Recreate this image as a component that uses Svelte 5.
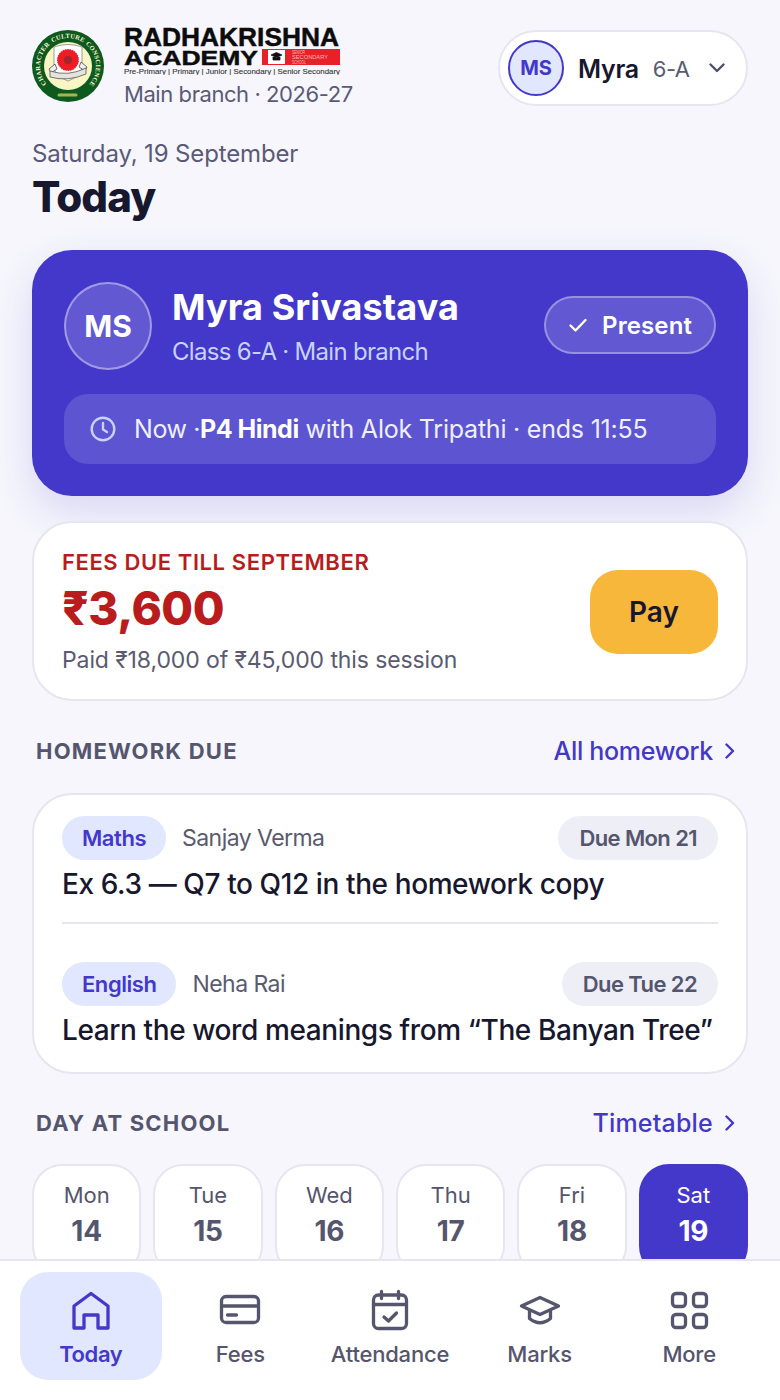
<script>
  const days = [
    { d: 'Mon', n: 14 }, { d: 'Tue', n: 15 }, { d: 'Wed', n: 16 },
    { d: 'Thu', n: 17 }, { d: 'Fri', n: 18 }, { d: 'Sat', n: 19, on: true }
  ];
</script>

<div class="page">
  <header class="top">
    <div class="brand">
      <svg class="emblem" viewBox="0 0 72 72" width="72" height="72">
        <defs>
          <path id="ringTop" d="M8 36a28 28 0 0 1 56 0" />
        </defs>
        <circle cx="36" cy="36" r="36" fill="#0e5a1e" />
        <circle cx="36" cy="36" r="24" fill="#f8f6c4" />
        <text class="ring"><textPath href="#ringTop" startOffset="50%" text-anchor="middle">CULTURE</textPath></text>
        <text class="ring" transform="rotate(85 36 36)"><textPath href="#ringTop" startOffset="50%" text-anchor="middle">CONSCIENCE</textPath></text>
        <text class="ring" transform="rotate(-85 36 36)"><textPath href="#ringTop" startOffset="50%" text-anchor="middle">CHARACTER</textPath></text>
        <path d="M22 17 Q36 12 50 17 V38 Q49 46 36 51 Q23 46 22 38Z" fill="#fff" stroke="#777" stroke-width=".7" />
        <circle cx="36" cy="30" r="11" fill="#ee1c25" />
        <circle cx="36" cy="30" r="11.500" fill="none" stroke="#fff" stroke-width="2" stroke-dasharray="1 1.600" />
        <circle cx="36" cy="30" r="4" fill="#a3262a" />
        <path d="M17 39l6-5 2 5-6 4zM55 37l-6-5-2 5 6 4z" fill="#eee" stroke="#333" stroke-width=".7" />
        <path d="M18 41q18 6 36-3v6q-18 8-36 3z" fill="#e4e4dc" stroke="#555" stroke-width=".8" />
        <path d="M27 65h18" stroke="#a5b54e" stroke-width="3" stroke-linecap="round" stroke-dasharray="2 1" />
      </svg>
      <div class="brand-text">
        <svg class="wordmark" viewBox="0 0 218 48" width="218" height="48">
          <text class="wm" x="0" y="19" font-size="25" textLength="215" lengthAdjust="spacingAndGlyphs">RADHAKRISHNA</text>
          <text class="wm" x="0" y="37.500" font-size="20.500" textLength="134" lengthAdjust="spacingAndGlyphs">ACADEMY</text>
          <rect x="138" y="22" width="78" height="16" fill="#e8202a" />
          <rect x="144" y="23" width="17" height="14" fill="#fff" />
          <path d="M147 28l5.500-2.500 5.500 2.500-5.500 2.500zM149 30v3h7v-3" fill="#111" stroke="#111" stroke-width=".8" />
          <text class="tag" x="168" y="27" textLength="13" lengthAdjust="spacingAndGlyphs">SENIOR</text>
          <text class="tag" x="168" y="31.800" textLength="36" lengthAdjust="spacingAndGlyphs">SECONDARY</text>
          <text class="tag" x="168" y="36.500" textLength="14" lengthAdjust="spacingAndGlyphs">SCHOOL</text>
          <text class="levels" x="0" y="47" textLength="216" lengthAdjust="spacingAndGlyphs">Pre-Primary | Primary | Junior  | Secondary | Senior Secondary</text>
        </svg>
        <div class="branch">Main branch · 2026-27</div>
      </div>
    </div>
    <button class="switch">
      <span class="mini">MS</span>
      <span class="sw-name">Myra</span>
      <span class="sw-class">6-A</span>
      <svg class="chev" viewBox="0 0 16 10" width="16" height="10"><path d="M1.500 1.500 8 8l6.500-6.500" /></svg>
    </button>
  </header>

  <div class="date">Saturday, 19 September</div>
  <h1>Today</h1>

  <section class="hero">
    <div class="hero-top">
      <div class="avatar">MS</div>
      <div class="hero-id">
        <div class="name">Myra Srivastava</div>
        <div class="cls">Class 6-A · Main branch</div>
      </div>
      <div class="present">
        <svg viewBox="0 0 20 20" width="20" height="20"><path d="M2.500 10.500 7.500 15.500 17.500 5" /></svg>
        Present
      </div>
    </div>
    <div class="now">
      <svg viewBox="0 0 26 26" width="26" height="26"><circle cx="13" cy="13" r="11.300" /><path d="M13 7v6.500l4 2.500" /></svg>
      <span><span class="now-lead">Now · </span><b>P4 Hindi</b> with Alok Tripathi · ends 11:55</span>
    </div>
  </section>

  <section class="fees">
    <div>
      <div class="fees-label">FEES DUE TILL SEPTEMBER</div>
      <div class="fees-amt">₹3,600</div>
      <div class="fees-paid">Paid ₹18,000 of ₹45,000 this session</div>
    </div>
    <button class="pay">Pay</button>
  </section>

  <div class="sec">
    <span class="sec-title">HOMEWORK DUE</span>
    <span class="sec-link">All homework <svg viewBox="0 0 10 16" width="10" height="16"><path d="M1.500 1.500 8 8l-6.500 6.500" /></svg></span>
  </div>

  <section class="hw">
    <div class="hw-item">
      <div class="hw-meta">
        <span class="chip">Maths</span><span class="teacher">Sanjay Verma</span><span class="due">Due Mon 21</span>
      </div>
      <div class="hw-text">Ex 6.3 — Q7 to Q12 in the homework copy</div>
    </div>
    <div class="hw-item second">
      <div class="hw-meta">
        <span class="chip">English</span><span class="teacher">Neha Rai</span><span class="due">Due Tue 22</span>
      </div>
      <div class="hw-text">Learn the word meanings from “The Banyan Tree”</div>
    </div>
  </section>

  <div class="sec day-sec">
    <span class="sec-title">DAY AT SCHOOL</span>
    <span class="sec-link tt">Timetable <svg viewBox="0 0 10 16" width="10" height="16"><path d="M1.500 1.500 8 8l-6.500 6.500" /></svg></span>
  </div>

  <div class="days">
    {#each days as x}
      <div class="day" class:on={x.on}>
        <span class="dn">{x.d}</span>
        <span class="dd">{x.n}</span>
      </div>
    {/each}
  </div>
</div>

<nav class="nav">
  <div class="tab active">
    <svg viewBox="0 0 44 44" width="44" height="44"><path d="M5 18 22 5.500 39 18V40H29V27H15V40H5Z" /></svg>
    <span>Today</span>
  </div>
  <div class="tab">
    <svg viewBox="0 0 44 44" width="44" height="44"><rect x="3.500" y="8.500" width="37" height="26" rx="4.500" /><path d="M3.500 18h37M9.500 27h9" /></svg>
    <span>Fees</span>
  </div>
  <div class="tab">
    <svg viewBox="0 0 44 44" width="44" height="44"><rect x="5.500" y="7" width="33" height="33.500" rx="5" /><path d="M5.500 16.500h33M13.500 3.500v7M30.500 3.500v7M16 29l4.500 4 8-8" /></svg>
    <span>Attendance</span>
  </div>
  <div class="tab">
    <svg viewBox="0 0 44 44" width="44" height="44"><path d="M3.500 18 22 9.500 40.500 18 22 26.500Z" /><path d="M11.500 23v7.500Q22 39 32.500 30.500V23" /></svg>
    <span>Marks</span>
  </div>
  <div class="tab">
    <svg viewBox="0 0 44 44" width="44" height="44"><rect x="5.500" y="5.500" width="13" height="13" rx="3.500" /><rect x="26.500" y="5.500" width="13" height="13" rx="3.500" /><rect x="5.500" y="26.500" width="13" height="13" rx="3.500" /><rect x="26.500" y="26.500" width="13" height="13" rx="3.500" /></svg>
    <span>More</span>
  </div>
</nav>

<style>
  :global(body) {
    margin: 0;
    background: #f6f6fc;
    font-family: Inter, "Noto Sans", sans-serif;
    color: #17172e;
  }
  :global(html), :global(body) { height: 1400px; overflow: hidden; }
  .page { padding: 27px 32px 0; box-sizing: border-box; height: 1400px; overflow: hidden; }

  .top { display: flex; justify-content: space-between; align-items: flex-start; }
  .brand { display: flex; gap: 20px; align-items: center; }
  .emblem { display: block; margin-top: -4px; }
  .ring { font: 700 6.400px "Liberation Serif", serif; fill: #fdf9d8; letter-spacing: .3px; }
  .brand-text { display: flex; flex-direction: column; }
  .wordmark { display: block; }
  .wm { font-family: "Liberation Sans", sans-serif; font-weight: 700; fill: #0c0c0c; stroke: #0c0c0c; stroke-width: .45; }
  .tag { font: 400 4.600px "Liberation Sans", sans-serif; fill: #f8b8b8; }
  .levels { font: 400 7.500px "Liberation Sans", sans-serif; fill: #333; stroke: #333; stroke-width: .1; }
  .branch { font-size: 22px; line-height: 28px; color: #5a5a78; margin-top: 5px; letter-spacing: -.43px; }

  .switch {
    display: flex; align-items: center; margin-top: 3px;
    width: 250px; height: 76px; box-sizing: border-box; padding: 0 0 0 8px;
    border: 2px solid #e6e6f0; border-radius: 38px; background: #fff;
    font-family: inherit;
  }
  .mini {
    width: 56px; height: 56px; box-sizing: border-box; border-radius: 50%;
    border: 2px solid #4338ca; background: #e0e7ff; color: #4338ca;
    display: flex; align-items: center; justify-content: center;
    font-size: 20px; font-weight: 700;
  }
  .sw-name { font-size: 25px; font-weight: 600; color: #17172e; margin-left: 14px; letter-spacing: -.3px; padding-top: 2px; }
  .sw-class { font-size: 22px; color: #5a5a70; margin-left: 14px; letter-spacing: -.5px; padding-top: 2px; }
  .chev { margin-left: 19px; }
  .chev path { fill: none; stroke: #50506a; stroke-width: 2.400; stroke-linecap: round; stroke-linejoin: round; }

  .date { font-size: 24px; line-height: 32px; color: #5a5a78; margin-top: 30px; letter-spacing: -.14px; }
  h1 { margin: 1px 0 0; font-size: 42px; line-height: 52px; font-weight: 800; color: #17172e; letter-spacing: -.9px; }

  .hero {
    margin-top: 27px; height: 246px; box-sizing: border-box; padding: 32px;
    background: #4338ca; border-radius: 40px; color: #fff;
    box-shadow: 0 16px 40px rgba(67, 56, 202, .16);
  }
  .hero-top { display: flex; align-items: center; }
  .avatar {
    width: 88px; height: 88px; box-sizing: border-box; border-radius: 50%;
    border: 2px solid rgba(255,255,255,.4); background: rgba(255,255,255,.16);
    display: flex; align-items: center; justify-content: center;
    font-size: 30px; font-weight: 700;
  }
  .hero-id { margin-left: 20px; flex: 1; padding-top: 1px; }
  .name { font-size: 36px; line-height: 44px; font-weight: 700; letter-spacing: .1px; }
  .cls { font-size: 24px; line-height: 32px; color: #c7d2fe; margin-top: 7px; letter-spacing: -.7px; }
  .present {
    display: flex; align-items: center; gap: 14px; height: 58px; box-sizing: border-box; margin-top: -2px;
    padding: 0 22px; border-radius: 29px; border: 2px solid rgba(255,255,255,.35);
    background: rgba(255,255,255,.16); font-size: 24px; font-weight: 600; letter-spacing: .1px;
  }
  .present svg path { fill: none; stroke: #fff; stroke-width: 2.400; stroke-linecap: round; stroke-linejoin: round; }
  .now {
    margin-top: 24px; height: 70px; border-radius: 24px; background: rgba(255,255,255,.14);
    display: flex; align-items: center; gap: 18px; padding: 0 26px; font-size: 25px; color: #eef0ff; letter-spacing: -.22px;
  }
  .now-lead { letter-spacing: -.4px; }
  .now b { font-weight: 700; color: #fff; letter-spacing: -.5px; }
  .now svg { flex: none; }
  .now svg * { fill: none; stroke: #c7d2fe; stroke-width: 2.400; stroke-linecap: round; stroke-linejoin: round; }

  .fees {
    margin-top: 25px; height: 180px; box-sizing: border-box; padding: 1px 28px 0;
    background: #fff; border: 2px solid #e6e6f0; border-radius: 40px;
    display: flex; align-items: center; justify-content: space-between;
  }
  .fees-label { font-size: 22px; line-height: 28px; font-weight: 600; color: #b91c1c; letter-spacing: .6px; }
  .fees-amt { font-size: 46px; line-height: 58px; font-weight: 800; color: #b91c1c; margin-top: 3px; letter-spacing: -.5px; }
  .fees-paid { font-size: 23px; line-height: 30px; color: #5a5a70; margin-top: 8px; letter-spacing: -.1px; }
  .pay {
    width: 128px; height: 84px; border: 0; border-radius: 28px; background: #f7b73b;
    font-family: inherit; font-size: 28px; font-weight: 600; color: #17172e;
  }

  .sec { display: flex; justify-content: space-between; align-items: center; padding: 0 4px; margin-top: 33px; height: 34px; }
  .sec-title { font-size: 22px; font-weight: 700; letter-spacing: 1.200px; color: #55556e; }
  .sec-link { display: flex; align-items: center; gap: 12px; font-size: 25px; font-weight: 500; color: #4338ca; padding-right: 9px; letter-spacing: -.3px; }
  .sec-link.tt { letter-spacing: .2px; }
  .sec-link svg path { fill: none; stroke: #4338ca; stroke-width: 2.400; stroke-linecap: round; stroke-linejoin: round; }

  .hw {
    margin-top: 25px; height: 281px; box-sizing: border-box; padding: 21px 28px 0;
    background: #fff; border: 2px solid #e6e6f0; border-radius: 40px;
  }
  .hw-item { height: 106px; }
  .hw-item.second { border-top: 2px solid #e6e6f0; padding-top: 38px; }
  .hw-meta { display: flex; align-items: center; height: 44px; }
  .chip {
    height: 44px; line-height: 44px; padding: 0 20px; border-radius: 22px;
    background: #e0e7ff; color: #4338ca; font-size: 22px; font-weight: 600; letter-spacing: -.45px;
  }
  .teacher { margin-left: 16px; font-size: 23px; color: #5a5a70; flex: 1; letter-spacing: -.55px; }
  .due {
    height: 44px; line-height: 44px; padding: 0 21px; border-radius: 22px;
    background: #eeeef6; color: #55556e; font-size: 22px; font-weight: 600; letter-spacing: -.6px;
  }
  .hw-text { margin-top: 5px; font-size: 28px; line-height: 38px; font-weight: 500; color: #17172e; letter-spacing: -.4px; white-space: nowrap; }

  .day-sec { margin-top: 32px; }
  .days { display: grid; grid-template-columns: repeat(6, 1fr); gap: 12px; margin-top: 24px; }
  .day {
    height: 112px; box-sizing: border-box; padding-top: 15px;
    background: #fff; border: 2px solid #e6e6f0; border-radius: 30px;
    display: flex; flex-direction: column; align-items: center;
    color: #55556e;
  }
  .day.on { background: #4338ca; border-color: #4338ca; color: #fff; }
  .dn { font-size: 22px; line-height: 28px; }
  .dd { font-size: 28px; line-height: 38px; font-weight: 700; margin-top: 3px; letter-spacing: -.2px; }

  .nav {
    position: fixed; left: 0; right: 0; bottom: 0; height: 141px; box-sizing: border-box;
    padding: 11px 20px 20px; background: #fff; border-top: 2px solid #e6e6f0;
    display: grid; grid-template-columns: repeat(5, 1fr); gap: 8px;
  }
  .tab {
    border-radius: 28px; display: flex; flex-direction: column; align-items: center;
    padding-top: 16px; box-sizing: border-box; color: #55556e; font-size: 22px; font-weight: 500; letter-spacing: -.2px;
  }
  .tab span { line-height: 28px; margin-top: 8px; }
  .tab svg * { fill: none; stroke: currentColor; stroke-width: 3.300; stroke-linecap: round; stroke-linejoin: round; }
  .tab.active { background: #e0e7ff; color: #4338ca; font-weight: 600; letter-spacing: -.4px; }
</style>
